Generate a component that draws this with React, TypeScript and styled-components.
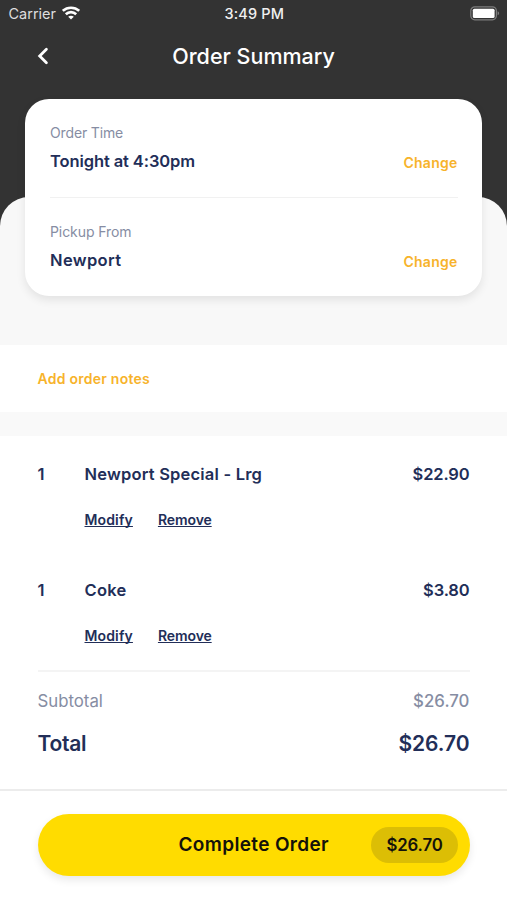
import React from 'react';
import styled, { createGlobalStyle } from 'styled-components';

const ink = '#222e58';
const muted = '#868da3';
const amber = '#f7b32b';

const GlobalStyle = createGlobalStyle`
  *, *::before, *::after { box-sizing: border-box; }
  body {
    margin: 0;
    background: #fff;
    font-family: Inter, "Liberation Sans", sans-serif;
    color: ${ink};
  }
  button { font: inherit; border: 0; padding: 0; background: none; cursor: pointer; }
`;

const Screen = styled.main`
  display: flex;
  flex-direction: column;
  height: 900px;
  overflow: hidden;
  background: #fff;
`;

const Top = styled.div`
  background: #333333;
`;

const StatusBar = styled.div`
  display: grid;
  grid-template-columns: 1fr auto 1fr;
  align-items: center;
  height: 26px;
  padding: 0 7px 0 8.5px;
  color: #fff;
  font-size: 14.5px;
`;

const Carrier = styled.div`
  display: flex;
  align-items: center;
  gap: 6px;
  color: #dedede;
`;

const Clock = styled.div`
  color: #f0f0f0;
  font-weight: 500;
  letter-spacing: 0.15px;
`;

const BatterySlot = styled.div`
  display: flex;
  justify-content: flex-end;
`;

const NavBar = styled.header`
  display: grid;
  grid-template-columns: 60px 1fr 60px;
  align-items: center;
  height: 59px;
  margin-bottom: 112px;
`;

const BackButton = styled.button`
  display: flex;
  padding-left: 36px;
  padding-top: 1px;
`;

const Title = styled.h1`
  margin: 0;
  color: #fff;
  text-align: center;
  font-size: 21.5px;
  font-weight: 500;
  letter-spacing: 0;
`;

const Panel = styled.section`
  height: 148px;
  padding: 0 25px;
  border-radius: 29px 29px 0 0;
  background: #f8f8f8;
`;

const Card = styled.div`
  position: relative;
  top: -98.5px;
  height: 197.5px;
  padding: 0 24.5px 0 25px;
  border-radius: 24px;
  background: #fff;
  box-shadow: 0 4px 10px rgba(0, 0, 0, 0.09);
`;

const CardRow = styled.div<{ $divided?: boolean }>`
  display: flex;
  justify-content: space-between;
  height: 99px;
  padding-top: 24px;
  border-bottom: ${(p) => (p.$divided ? '1px solid #f1f1f1' : '0')};
`;

const Label = styled.div<{ $spacing: number }>`
  height: 20px;
  line-height: 20px;
  font-size: 14px;
  letter-spacing: ${(p) => p.$spacing}px;
  color: ${muted};
`;

const Value = styled.div<{ $spacing: number }>`
  margin-top: 6px;
  line-height: 24px;
  font-size: 16.5px;
  font-weight: 600;
  letter-spacing: ${(p) => p.$spacing}px;
`;

const ChangeButton = styled.button`
  height: 20px;
  margin-top: 30.5px;
  line-height: 20px;
  font-size: 14px;
  font-weight: 600;
  letter-spacing: 0.25px;
  color: ${amber};
`;

const Notes = styled.section`
  display: flex;
  align-items: center;
  height: 67px;
  padding-left: 37.5px;
`;

const NotesButton = styled.button`
  font-size: 14px;
  font-weight: 600;
  letter-spacing: 0.25px;
  color: ${amber};
`;

const Gap = styled.div`
  height: 24px;
  background: #f9f9f9;
`;

const Order = styled.section`
  display: flex;
  flex-direction: column;
  height: 353px;
  padding: 0 37.5px;
`;

const Item = styled.article`
  display: grid;
  grid-template-columns: 47px 1fr auto;
  grid-template-rows: 24px 20px;
  row-gap: 24px;
  height: 116px;
  padding-top: 26px;
  line-height: 24px;
  font-size: 16.5px;
  font-weight: 600;
`;

const ItemName = styled.div<{ $spacing: number }>`
  letter-spacing: ${(p) => p.$spacing}px;
`;

const ItemPrice = styled.div`
  letter-spacing: -0.15px;
`;

const Actions = styled.div`
  display: flex;
  grid-column: 2 / 4;
  gap: 25px;
`;

const ActionLink = styled.button<{ $spacing: number }>`
  line-height: 20px;
  font-size: 14px;
  font-weight: 600;
  letter-spacing: ${(p) => p.$spacing}px;
  color: ${ink};
  text-decoration: underline;
  text-decoration-thickness: 1px;
  text-underline-offset: 1px;
  text-decoration-skip-ink: none;
`;

const Totals = styled.div`
  margin-top: 2px;
  border-top: 2px solid #f4f4f4;
  padding-top: 17px;
`;

const SubtotalRow = styled.div`
  display: flex;
  justify-content: space-between;
  line-height: 24px;
  font-size: 16.8px;
  color: ${muted};
`;

const SubtotalPrice = styled.span`
  font-weight: 500;
  letter-spacing: 0.05px;
`;

const TotalRow = styled.div`
  display: flex;
  justify-content: space-between;
  margin-top: 16px;
  line-height: 30px;
  font-size: 21px;
  font-weight: 600;
  letter-spacing: -0.3px;
`;

const TotalPrice = styled.span`
  letter-spacing: -0.05px;
`;

const Footer = styled.footer`
  height: 111px;
  padding: 23px 37px 0 37.5px;
  border-top: 2px solid #ececec;
`;

const CompleteButton = styled.button`
  && {
    display: grid;
    grid-template-columns: 87px 1fr 87px;
    align-items: center;
    width: 100%;
    height: 61.5px;
    padding: 0 12px;
    border-radius: 31px;
    background: #ffdc00;
    box-shadow: 0 4px 9px rgba(0, 0, 0, 0.09);
    color: #14120a;
    font-size: 19px;
    font-weight: 600;
    letter-spacing: 0.35px;
  }
`;

const CompleteLabel = styled.span`
  grid-column: 2;
  white-space: nowrap;
`;

const Amount = styled.span`
  height: 36px;
  line-height: 36px;
  border-radius: 18px;
  background: #dcbe05;
  font-size: 16.8px;
  letter-spacing: -0.15px;
`;

const WifiIcon = () => (
  <svg width="18" height="14" viewBox="0 0 18 14" fill="none" stroke="#fff" strokeWidth="2.6">
    <path d="M0.8 4.9C5.4 0.6 12.6 0.6 17.2 4.9" />
    <path d="M3.8 8.3C6.8 5.4 11.2 5.4 14.2 8.3" />
    <path d="M9 13.6L6.2 10.8C7.8 9.3 10.2 9.3 11.8 10.8Z" fill="#fff" stroke="none" />
  </svg>
);

const BatteryIcon = () => (
  <svg width="30" height="15" viewBox="0 0 30 15">
    <rect x="0.8" y="0.8" width="25.6" height="13" rx="4" fill="none" stroke="#7d7d7d" strokeWidth="1.2" />
    <rect x="2.8" y="2.7" width="21.8" height="9.4" rx="1.6" fill="#fff" />
    <path d="M27.6 5.3C29.6 6 29.6 8.6 27.6 9.3Z" fill="#7d7d7d" />
  </svg>
);

const BackIcon = () => (
  <svg width="13" height="18" viewBox="0 0 13 18" fill="none" stroke="#fff" strokeWidth="2.8" strokeLinecap="round">
    <path d="M10.4 2.3L3.7 9L10.4 15.7" />
  </svg>
);

const details = [
  { label: 'Order Time', labelSpacing: -0.14, value: 'Tonight at 4:30pm', valueSpacing: -0.1 },
  { label: 'Pickup From', labelSpacing: -0.08, value: 'Newport', valueSpacing: 0.36 },
];

const items = [
  { quantity: 1, name: 'Newport Special - Lrg', spacing: 0.2, price: '$22.90' },
  { quantity: 1, name: 'Coke', spacing: 0.25, price: '$3.80' },
];

export default function App() {
  return (
    <Screen>
      <GlobalStyle />
      <Top>
        <StatusBar>
          <Carrier>Carrier<WifiIcon /></Carrier>
          <Clock>3:49 PM</Clock>
          <BatterySlot><BatteryIcon /></BatterySlot>
        </StatusBar>
        <NavBar>
          <BackButton aria-label="Back"><BackIcon /></BackButton>
          <Title>Order Summary</Title>
        </NavBar>
        <Panel>
          <Card>
            {details.map((d, i) => (
              <CardRow key={d.label} $divided={i === 0}>
                <div>
                  <Label $spacing={d.labelSpacing}>{d.label}</Label>
                  <Value $spacing={d.valueSpacing}>{d.value}</Value>
                </div>
                <ChangeButton>Change</ChangeButton>
              </CardRow>
            ))}
          </Card>
        </Panel>
      </Top>
      <Notes><NotesButton>Add order notes</NotesButton></Notes>
      <Gap />
      <Order>
        {items.map((item) => (
          <Item key={item.name}>
            <div>{item.quantity}</div>
            <ItemName $spacing={item.spacing}>{item.name}</ItemName>
            <ItemPrice>{item.price}</ItemPrice>
            <Actions>
              <ActionLink $spacing={0.15}>Modify</ActionLink>
              <ActionLink $spacing={-0.1}>Remove</ActionLink>
            </Actions>
          </Item>
        ))}
        <Totals>
          <SubtotalRow><span>Subtotal</span><SubtotalPrice>$26.70</SubtotalPrice></SubtotalRow>
          <TotalRow><span>Total</span><TotalPrice>$26.70</TotalPrice></TotalRow>
        </Totals>
      </Order>
      <Footer>
        <CompleteButton>
          <CompleteLabel>Complete Order</CompleteLabel>
          <Amount>$26.70</Amount>
        </CompleteButton>
      </Footer>
    </Screen>
  );
}
